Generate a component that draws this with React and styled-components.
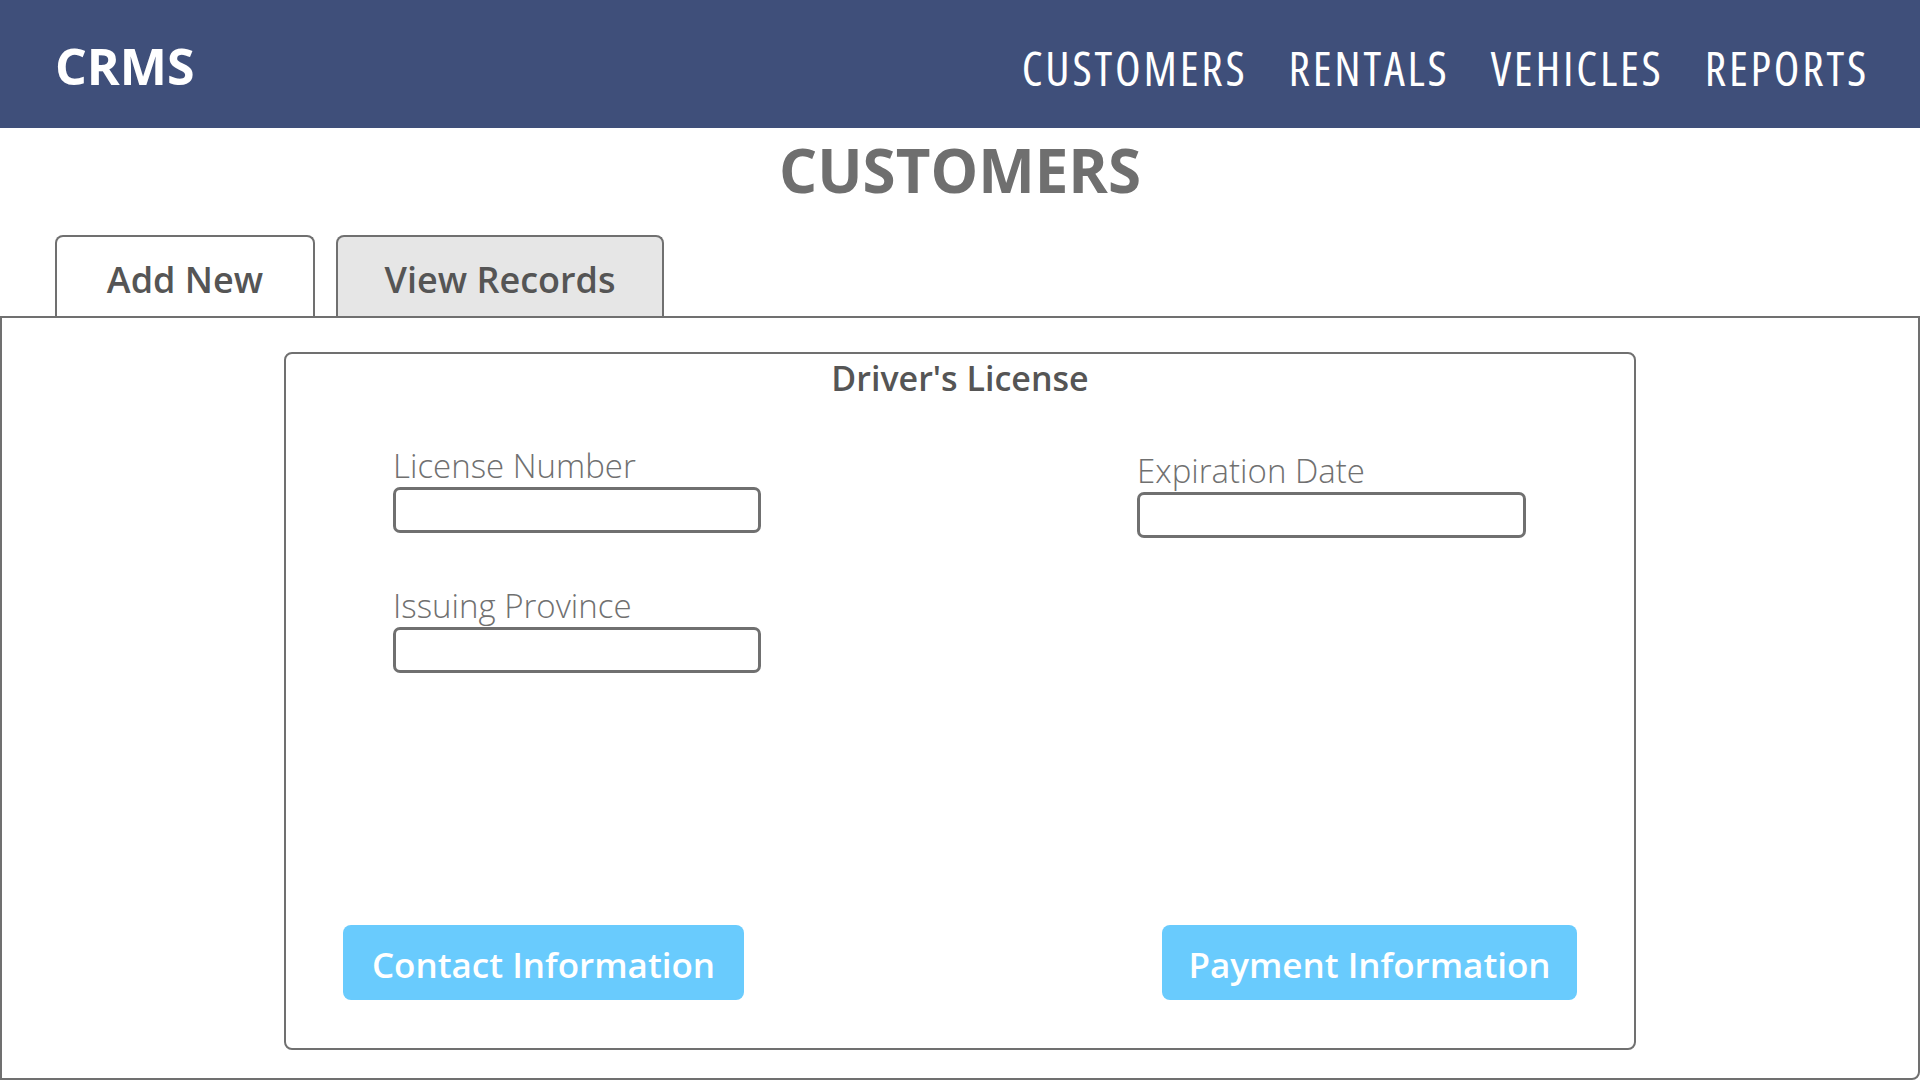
import React from 'react'
import styled, { createGlobalStyle } from 'styled-components'

const GlobalStyle = createGlobalStyle`
  html, body {
    margin: 0;
    padding: 0;
    background: #ffffff;
    font-family: "Open Sans", "Noto Sans", sans-serif;
  }
  * {
    box-sizing: border-box;
  }
`

const Page = styled.div`
  width: 1920px;
  height: 1080px;
  overflow: hidden;
  display: flex;
  flex-direction: column;
`

const Header = styled.header`
  height: 128px;
  flex: none;
  background: #3f4f7a;
  display: flex;
  align-items: center;
  justify-content: space-between;
  padding: 0 51px 0 55px;
`

const Brand = styled.div`
  color: #ffffff;
  font-size: 50px;
  font-weight: 700;
  line-height: 1;
  margin-top: 4px;
`

const Nav = styled.nav`
  display: flex;
  gap: 41px;
  margin-top: 9px;
`

const NavLink = styled.a`
  color: #ffffff;
  font-size: 47px;
  font-weight: 400;
  font-stretch: 75%;
  letter-spacing: 2.8px;
  line-height: 1;
  text-decoration: none;
  cursor: pointer;
`

const Title = styled.h1`
  margin: 11px 0 0;
  text-align: center;
  color: #6f6f6f;
  font-size: 60px;
  font-weight: 700;
  line-height: 62px;
`

const Tabs = styled.div`
  display: flex;
  gap: 21px;
  padding-left: 55px;
  margin-top: 34px;
`

const Tab = styled.button`
  width: ${p => p.$w}px;
  height: 81px;
  padding: 6px 0 0;
  border: 2px solid #707070;
  border-bottom: none;
  border-radius: 8px 8px 0 0;
  background: ${p => (p.$active ? '#ffffff' : '#e6e6e6')};
  color: #555555;
  font-family: inherit;
  font-size: 36px;
  font-weight: 600;
  cursor: pointer;
`

const Panel = styled.main`
  flex: 1;
  border: 2px solid #707070;
  border-bottom-right-radius: 8px;
  padding: 34px 0 28px;
`

const Card = styled.section`
  width: 1352px;
  height: 698px;
  margin: 0 auto;
  border: 2px solid #707070;
  border-radius: 8px;
  padding: 7px 57px 48px;
  display: flex;
  flex-direction: column;
`

const CardTitle = styled.h2`
  margin: 0;
  text-align: center;
  color: #555555;
  font-size: 34px;
  font-weight: 600;
  line-height: 34px;
`

const Fields = styled.div`
  display: grid;
  grid-template-columns: 744px 1fr;
  padding-left: 50px;
  margin-top: 55px;
`

const Column = styled.div`
  display: flex;
  flex-direction: column;
  gap: 57px;
  padding-top: ${p => p.$offset || 0}px;
`

const Field = styled.label`
  display: flex;
  flex-direction: column;
  gap: 5px;
`

const FieldLabel = styled.span`
  color: #707070;
  font-size: 33px;
  font-weight: 300;
  line-height: 32px;
`

const Input = styled.input`
  width: ${p => p.$w}px;
  height: 46px;
  border: 3px solid #707070;
  border-radius: 7px;
  background: #ffffff;
  font-family: inherit;
  font-size: 24px;
  padding: 0 10px;
  outline: none;
`

const Actions = styled.div`
  margin-top: auto;
  display: flex;
  justify-content: space-between;
`

const ActionButton = styled.button`
  width: ${p => p.$w}px;
  height: 75px;
  padding: 4px 0 0;
  border: none;
  border-radius: 8px;
  background: #69cbfd;
  color: #ffffff;
  font-family: inherit;
  font-size: 35px;
  font-weight: 600;
  cursor: pointer;
`

export default function App() {
  return (
    <Page>
      <GlobalStyle />
      <Header>
        <Brand>CRMS</Brand>
        <Nav>
          <NavLink>CUSTOMERS</NavLink>
          <NavLink>RENTALS</NavLink>
          <NavLink>VEHICLES</NavLink>
          <NavLink>REPORTS</NavLink>
        </Nav>
      </Header>
      <Title>CUSTOMERS</Title>
      <Tabs>
        <Tab $active $w={260}>Add New</Tab>
        <Tab $w={328}>View Records</Tab>
      </Tabs>
      <Panel>
        <Card>
          <CardTitle>Driver's License</CardTitle>
          <Fields>
            <Column>
              <Field>
                <FieldLabel>License Number</FieldLabel>
                <Input $w={368} />
              </Field>
              <Field>
                <FieldLabel>Issuing Province</FieldLabel>
                <Input $w={368} />
              </Field>
            </Column>
            <Column $offset={5}>
              <Field>
                <FieldLabel>Expiration Date</FieldLabel>
                <Input $w={389} />
              </Field>
            </Column>
          </Fields>
          <Actions>
            <ActionButton $w={401}>Contact Information</ActionButton>
            <ActionButton $w={415}>Payment Information</ActionButton>
          </Actions>
        </Card>
      </Panel>
    </Page>
  )
}
